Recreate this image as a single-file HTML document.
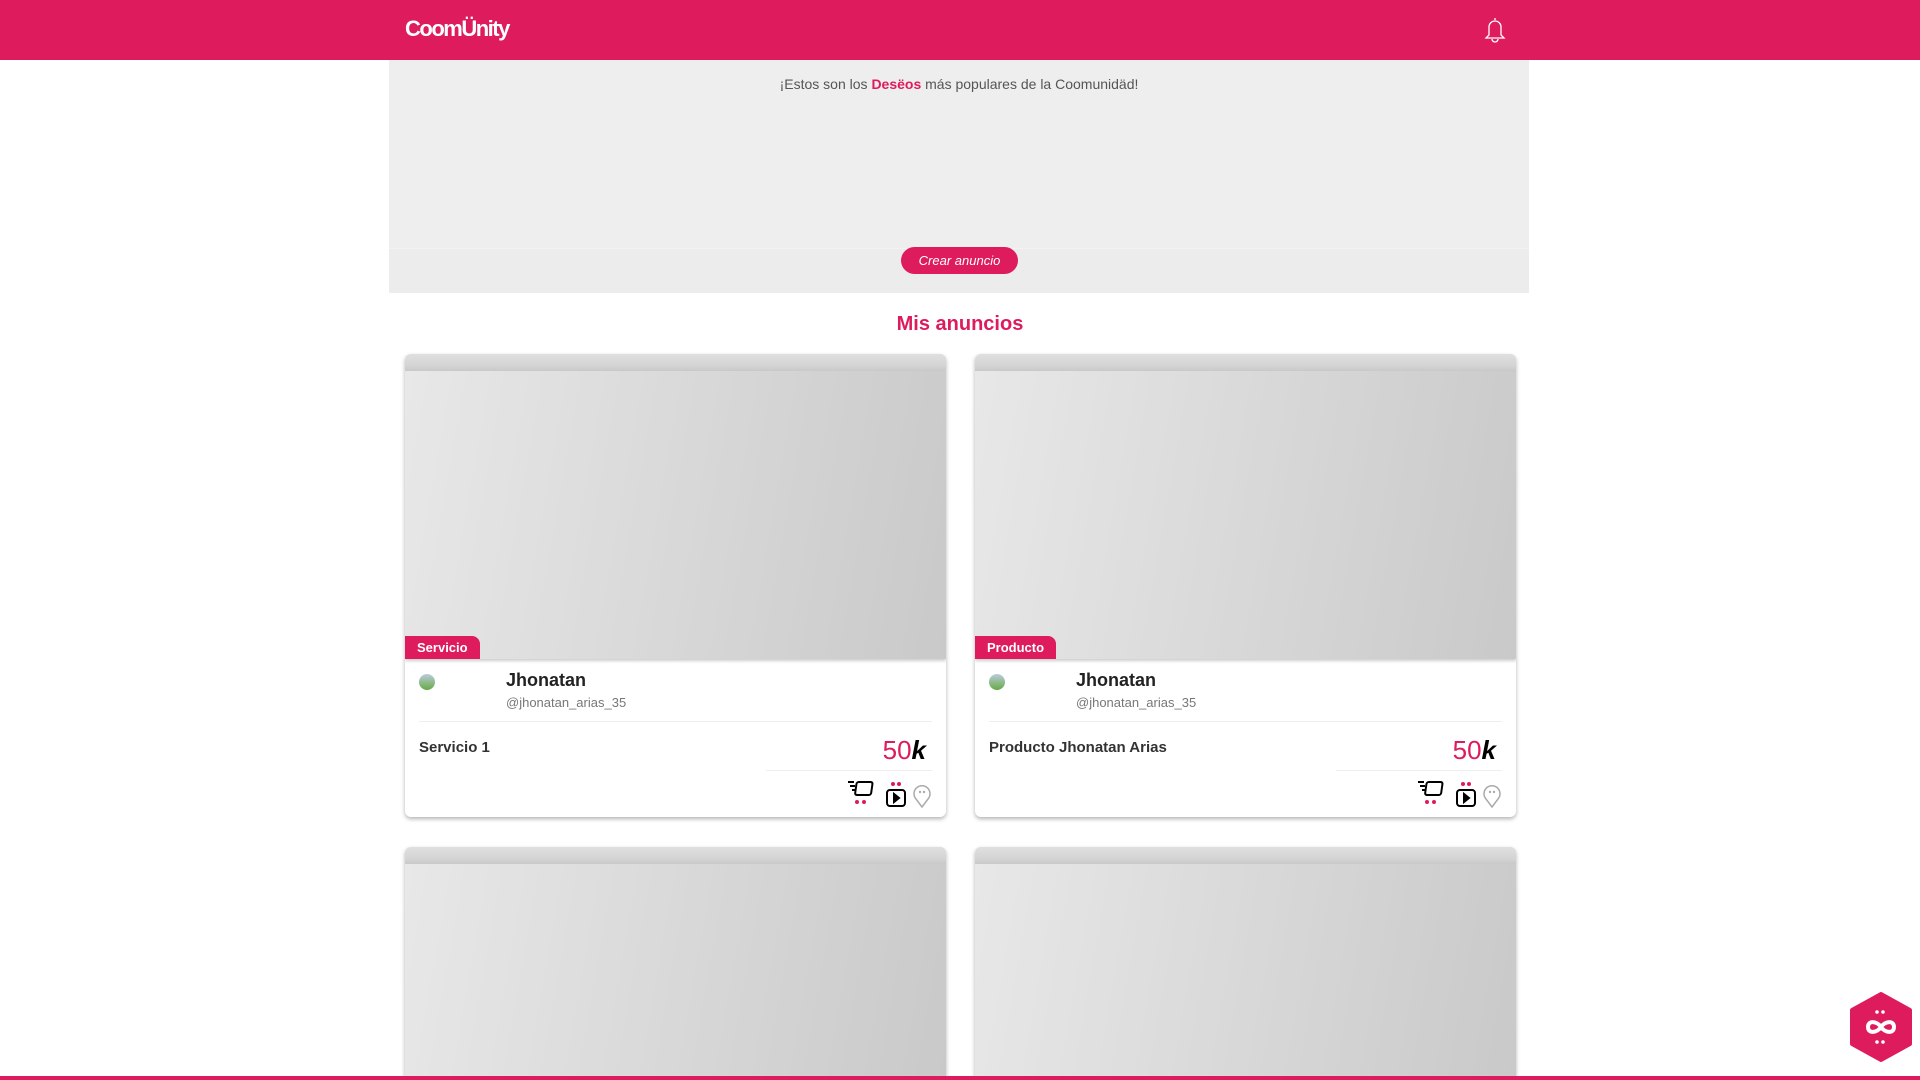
<!DOCTYPE html>
<html style="overflow:hidden;height:1080px"><head><meta charset="utf-8"><style>
*{box-sizing:border-box;margin:0;padding:0}
html,body{width:1920px;height:1080px;overflow:hidden}
body{background:#fff;font-family:"Liberation Sans",sans-serif;position:relative}
.hdr{position:absolute;left:0;top:0;width:1920px;height:60px;background:#dd1b5d}
.logo{position:absolute;left:405px;top:16px;color:#fff;font-size:22px;font-weight:bold;letter-spacing:-1.5px}
.panel{position:absolute;left:389px;top:60px;width:1140px;height:233px;background:#eeeeee}
.panel .band{position:absolute;left:0;top:188px;width:100%;height:45px;background:#ececec;border-top:1px solid #f3f3f3}
.msg{position:absolute;left:0;width:100%;top:16px;text-align:center;font-size:14px;color:#555}
.msg b{color:#dd1b5d}
.btn{position:absolute;left:512px;top:187px;width:117px;height:27px;border-radius:14px;background:#dd1b5d;color:#fff;font-style:italic;font-size:13px;text-align:center;line-height:27px}
h2{position:absolute;left:0;width:1920px;top:313px;text-align:center;color:#dd1b5d;font-size:20px;font-weight:bold}
.card{position:absolute;width:541px;height:463px;border-radius:6px;background:#fff;box-shadow:0 2px 4px rgba(0,0,0,.3);overflow:hidden}
.img{position:absolute;left:0;top:0;width:100%;height:305px;background:linear-gradient(100deg,#e8e8e8,#c9c9c9);box-shadow:0 2px 3px rgba(0,0,0,.2)}
.img:before{content:"";position:absolute;left:0;top:0;width:100%;height:17px;background:linear-gradient(#e0e0e0,#d4d4d4 70%,#c8c8c8)}
.tag{position:absolute;left:0;top:282px;height:23px;padding:0 12px;background:#dd1b5d;color:#fff;font-size:13px;font-weight:bold;line-height:24px;border-radius:0 8px 0 0}
.av{position:absolute;left:14px;top:320px;width:16px;height:16px;border-radius:50%;background:linear-gradient(#bcd,#6a4)}
.nm{position:absolute;left:101px;top:316px;font-size:18px;font-weight:bold;color:#222}
.hd{position:absolute;left:101px;top:341px;font-size:13px;color:#777}
.d1{position:absolute;left:14px;right:14px;top:367px;height:1px;background:#eee}
.tt{position:absolute;left:14px;top:385px;font-size:15px;font-weight:bold;color:#333}
.pr{position:absolute;right:20px;top:381px;font-size:26px;color:#dd1b5d}
.pr i{color:#000;font-weight:bold}
.d2{position:absolute;left:361px;right:14px;top:416px;height:1px;background:#eee}
.ic{position:absolute;right:14px;top:426px}
.fab{position:absolute;left:1850px;top:992px}
.bl{position:absolute;left:0;top:1076px;width:1920px;height:4px;background:#dd1b5d}
</style></head><body>
<div class="hdr"><div class="logo">CoomÜnity</div>
<svg style="position:absolute;left:1483px;top:16px" width="24" height="28" viewBox="0 0 24 28" fill="none" stroke="#fff" stroke-width="1.3"><path d="M12 2v2M6 19V11a6 6 0 0 1 12 0v8l3 3H3z"/><path d="M9 23a3 3 0 0 0 6 0"/></svg></div>
<div class="panel"><div class="band"></div><div class="msg">¡Estos son los <b>Desëos</b> más populares de la Coomunidäd!</div><div class="btn">Crear anuncio</div></div>
<h2>Mis anuncios</h2>
<div class="card" style="left:405px;top:354px"><div class="img"></div><div class="tag">Servicio</div><div class="av"></div><div class="nm">Jhonatan</div><div class="hd">@jhonatan_arias_35</div><div class="d1"></div><div class="tt">Servicio 1</div><div class="pr">50<i>k</i></div><div class="d2"></div>
<svg class="ic" width="84" height="28" viewBox="0 0 84 28" fill="none" stroke="#000" stroke-width="2"><path d="M0 2h6M2 6h5M4 10h4"/><rect x="9" y="2" width="16" height="13" rx="2" transform="skewX(-8)"/><circle cx="9" cy="22" r="2" fill="#dd1b5d" stroke="none"/><circle cx="16" cy="22" r="2" fill="#dd1b5d" stroke="none"/><circle cx="45" cy="4" r="2" fill="#dd1b5d" stroke="none"/><circle cx="51" cy="4" r="2" fill="#dd1b5d" stroke="none"/><rect x="39" y="10" width="18" height="16" rx="3"/><path d="M46 14v8l5-4z" fill="#000"/><path d="M74 27l-6-8a8 8 0 1 1 12 0z" stroke="#aaa" stroke-width="1.5"/><circle cx="72" cy="12" r="1.2" fill="#aaa" stroke="none"/><circle cx="76" cy="12" r="1.2" fill="#aaa" stroke="none"/></svg></div>
<div class="card" style="left:975px;top:354px"><div class="img"></div><div class="tag">Producto</div><div class="av"></div><div class="nm">Jhonatan</div><div class="hd">@jhonatan_arias_35</div><div class="d1"></div><div class="tt">Producto Jhonatan Arias</div><div class="pr">50<i>k</i></div><div class="d2"></div>
<svg class="ic" width="84" height="28" viewBox="0 0 84 28" fill="none" stroke="#000" stroke-width="2"><path d="M0 2h6M2 6h5M4 10h4"/><rect x="9" y="2" width="16" height="13" rx="2" transform="skewX(-8)"/><circle cx="9" cy="22" r="2" fill="#dd1b5d" stroke="none"/><circle cx="16" cy="22" r="2" fill="#dd1b5d" stroke="none"/><circle cx="45" cy="4" r="2" fill="#dd1b5d" stroke="none"/><circle cx="51" cy="4" r="2" fill="#dd1b5d" stroke="none"/><rect x="39" y="10" width="18" height="16" rx="3"/><path d="M46 14v8l5-4z" fill="#000"/><path d="M74 27l-6-8a8 8 0 1 1 12 0z" stroke="#aaa" stroke-width="1.5"/><circle cx="72" cy="12" r="1.2" fill="#aaa" stroke="none"/><circle cx="76" cy="12" r="1.2" fill="#aaa" stroke="none"/></svg></div>
<div class="card" style="left:405px;top:847px;height:229px;border-radius:6px 6px 0 0"><div class="img" style="height:229px"></div></div>
<div class="card" style="left:975px;top:847px;height:229px;border-radius:6px 6px 0 0"><div class="img" style="height:229px"></div></div>
<svg class="fab" width="62" height="70" viewBox="0 0 62 70"><path d="M31 2l29 16v34L31 68 2 52V18z" fill="#dd1b5d" stroke="#dd1b5d" stroke-width="4" stroke-linejoin="round"/><path d="M31 35c-4-6-13-7-13 0s9 6 13 0c4-6 13-7 13 0s-9 6-13 0" fill="none" stroke="#fff" stroke-width="4"/><circle cx="27" cy="20" r="1.8" fill="#fff"/><circle cx="33" cy="20" r="1.8" fill="#fff"/><circle cx="27" cy="50" r="1.8" fill="#fff"/><circle cx="33" cy="50" r="1.8" fill="#fff"/></svg>
<div class="bl"></div>
</body></html>
